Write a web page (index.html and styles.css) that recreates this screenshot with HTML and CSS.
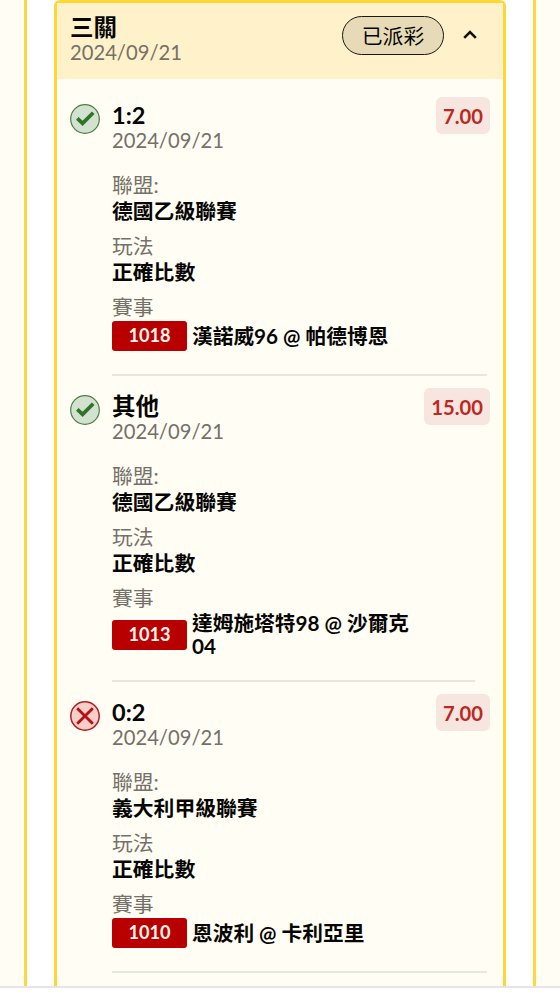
FILE: index.html
```
<!DOCTYPE html>
<html lang="zh-Hant">

<head>
  <meta charset="utf-8">
  <title>三關</title>
  <link rel="stylesheet" href="styles.css">
</head>

<body>
  <div class="page">
    <div class="panel">
      <div class="card">
        <div class="card-header">
          <div>
            <div class="title">三關</div>
            <div class="date">2024/09/21</div>
          </div>
          <div class="status">已派彩</div>
          <svg class="arrow" viewBox="0 0 16 16"><path d="M2.2 10.8 8 5l5.8 5.8" fill="none" stroke="#111" stroke-width="2.6"/></svg>
        </div>

        <div class="bet">
          <svg class="icon" viewBox="0 0 30 30"><circle cx="15" cy="15" r="14.3" fill="#d3e2ce" stroke="#488047" stroke-width="1.2"/><path d="M7.3 14.4 12.6 19.4 23.2 8.8" fill="none" stroke="#2f7328" stroke-width="3.7"/></svg>
          <div class="bet-body">
            <div class="bet-top">
              <div>
                <div class="title">1:2</div>
                <div class="date">2024/09/21</div>
              </div>
              <div class="odds">7.00</div>
            </div>
            <div class="label">聯盟:</div>
            <div class="value">德國乙級聯賽</div>
            <div class="label">玩法</div>
            <div class="value">正確比數</div>
            <div class="label">賽事</div>
            <div class="match">
              <span class="code">1018</span>
              <span class="teams">漢諾威96 @ 帕德博恩</span>
            </div>
            <div class="line"></div>
          </div>
        </div>

        <div class="bet">
          <svg class="icon" viewBox="0 0 30 30"><circle cx="15" cy="15" r="14.3" fill="#d3e2ce" stroke="#488047" stroke-width="1.2"/><path d="M7.3 14.4 12.6 19.4 23.2 8.8" fill="none" stroke="#2f7328" stroke-width="3.7"/></svg>
          <div class="bet-body">
            <div class="bet-top">
              <div>
                <div class="title">其他</div>
                <div class="date">2024/09/21</div>
              </div>
              <div class="odds">15.00</div>
            </div>
            <div class="label">聯盟:</div>
            <div class="value">德國乙級聯賽</div>
            <div class="label">玩法</div>
            <div class="value">正確比數</div>
            <div class="label">賽事</div>
            <div class="match">
              <span class="code">1013</span>
              <span class="teams">達姆施塔特98 @ 沙爾克<br>04</span>
            </div>
            <div class="line line-short"></div>
          </div>
        </div>

        <div class="bet">
          <svg class="icon" viewBox="0 0 30 30"><circle cx="15" cy="15" r="14.2" fill="#f6cfc9" stroke="#b9191c" stroke-width="1.5"/><path d="M7.2 7.2 22.8 22.8M22.8 7.2 7.2 22.8" fill="none" stroke="#b50f14" stroke-width="2.8"/></svg>
          <div class="bet-body">
            <div class="bet-top">
              <div>
                <div class="title">0:2</div>
                <div class="date">2024/09/21</div>
              </div>
              <div class="odds">7.00</div>
            </div>
            <div class="label">聯盟:</div>
            <div class="value">義大利甲級聯賽</div>
            <div class="label">玩法</div>
            <div class="value">正確比數</div>
            <div class="label">賽事</div>
            <div class="match">
              <span class="code">1010</span>
              <span class="teams">恩波利 @ 卡利亞里</span>
            </div>
            <div class="line"></div>
          </div>
        </div>
      </div>
    </div>
  </div>
</body>

</html>
```

FILE: styles.css
```
* {
  box-sizing: border-box;
}

body {
  margin: 0;
  height: 1000px;
  overflow: hidden;
  background-color: #fff;
  font-family: Lato, "Noto Sans CJK TC", sans-serif;
  font-size: 20.8px;
  color: #060605;
}

.page {
  height: 988px;
  overflow: hidden;
  padding: 0 24px;
  background-color: #fffdf4;
  border-bottom: 2px solid #e8e6e4;
}

.panel {
  height: 986px;
  padding: 0 27px;
  background-color: #fff;
  border-left: 3px solid #fad840;
  border-right: 3px solid #fad840;
}

.card {
  height: 1100px;
  background-color: #fffdf4;
  border: 3px solid #fdd835;
  border-radius: 6px;
}

.card-header {
  display: flex;
  align-items: flex-start;
  height: 76px;
  padding: 12px 25px 0 13px;
  background-color: #fff1ca;
}

.title {
  height: 25px;
  line-height: 25px;
  font-size: 23.5px;
  font-weight: 700;
}

.date {
  height: 25px;
  line-height: 25px;
  font-size: 20.2px;
  color: #757169;
}

.status {
  width: 102px;
  height: 39px;
  margin: 1px 18px 0 auto;
  border: 1.5px solid #1a1810;
  border-radius: 20px;
  background-color: #e6dbb6;
  text-align: center;
  line-height: 38px;
}

.arrow {
  width: 16px;
  height: 16px;
  margin-top: 12px;
}

.bet {
  display: flex;
  align-items: flex-start;
  padding-left: 13px;
}

.bet + .bet {
  margin-top: 12px;
}

.card-header + .bet {
  margin-top: 18px;
}

.icon {
  width: 30px;
  height: 30px;
  margin: 7px 12px 0 0;
}

.bet-body {
  flex: 1;
}

.bet-top {
  display: flex;
  justify-content: space-between;
  height: 75px;
  padding-right: 13px;
}

.bet-top .title {
  margin-top: 6px;
}

.odds {
  height: 37px;
  padding: 0 7px;
  border-radius: 6px;
  background-color: #f7e5df;
  color: #b92a24;
  font-size: 20.2px;
  line-height: 38px;
  font-weight: 700;
}

.label,
.value {
  height: 26px;
  line-height: 26px;
}

.label {
  color: #757169;
}

.value {
  margin-bottom: 9px;
  font-weight: 700;
}

.match {
  display: flex;
  align-items: center;
  min-height: 30px;
  margin-top: 1px;
  line-height: 22.5px;
  font-weight: 700;
}

.teams {
  font-size: 20.7px;
}

.code {
  width: 75px;
  height: 30px;
  margin-right: 5px;
  border-radius: 3px;
  background-color: #b80000;
  color: #fff5ee;
  font-size: 18.2px;
  line-height: 29px;
  text-align: center;
}

.line {
  height: 2px;
  margin: 23px 16px 0 0;
  background-color: #e9e6df;
}

.line-short {
  margin-right: 28px;
}
```
